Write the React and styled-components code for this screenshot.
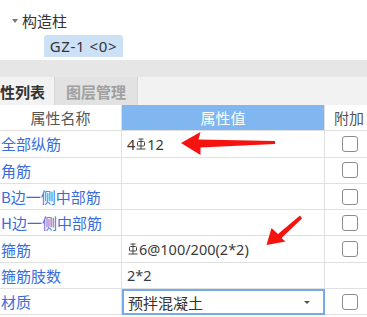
import styled, { createGlobalStyle } from 'styled-components';

const Global = createGlobalStyle`
	html, body {
		margin: 0;
		padding: 0;
		background: #fff;
		overflow: hidden;
	}
	body {
		font-family: "Noto Sans", "Noto Sans CJK SC", sans-serif;
		color: #333;
	}
`;

const Page = styled.div`
	position: relative;
	width: 367px;
	height: 317px;
	overflow: hidden;
`;

const Tree = styled.div`
	height: 57px;
	display: flex;
	flex-direction: column;
	padding-top: 9px;
	box-sizing: border-box;
`;

const TreeRow = styled.div`
	display: flex;
	align-items: center;
	height: 22px;
	padding-left: ${(p) => p.indent}px;
	font-size: 15px;
	color: #333;
	font-family: "Noto Sans CJK SC", sans-serif;
`;

const Caret = styled.span`
	width: 0;
	height: 0;
	border-left: 3.5px solid transparent;
	border-right: 3.5px solid transparent;
	border-top: 4px solid #777;
	margin-right: 4px;
	margin-top: 2px;
`;

const Chip = styled.div`
	margin-top: 4px;
	margin-left: 44px;
	width: 79px;
	height: 22px;
	display: flex;
	align-items: center;
	justify-content: center;
	background: #cde1f6;
	border-radius: 3px 3px 0 0;
	font-size: 15px;
	color: #333;
	letter-spacing: 0.6px;
`;

const Band = styled.div`
	margin-top: 3px;
	height: 17px;
	background: #e6e6e6;
`;

const TabBar = styled.div`
	height: 28px;
	display: flex;
	background: #f2f2f2;
	margin-left: -15px;
`;

const Tab = styled.div`
	display: flex;
	align-items: center;
	padding: 0 ${(p) => (p.active ? 9 : 11)}px 0 ${(p) => (p.active ? 0 : 11)}px;
	font-size: 15px;
	font-weight: bold;
	font-family: "Noto Sans CJK SC", sans-serif;
	color: ${(p) => (p.active ? '#333' : '#a0a0a0')};
	background: ${(p) => (p.active ? '#f2f2f2' : '#e2e2e2')};
	border-left: ${(p) => (p.active ? 'none' : '1px solid #d6d6d6')};
	border-right: ${(p) => (p.active ? 'none' : '1px solid #d6d6d6')};
`;

const Grid = styled.div`
	display: grid;
	grid-template-columns: 122px 203px 49px;
	grid-auto-rows: 26.3px;
	font-family: "Noto Sans CJK SC", sans-serif;
	font-size: 15px;
`;

const Head = styled.div`
	display: flex;
	align-items: center;
	justify-content: center;
	background: ${(p) => (p.blue ? '#80b7f0' : '#fff')};
	color: ${(p) => (p.blue ? '#fff' : '#555')};
	border-bottom: 1px solid #dedede;
	border-right: 1px solid #dedede;
	box-sizing: border-box;
`;

const Cell = styled.div`
	display: flex;
	align-items: center;
	box-sizing: border-box;
	border-bottom: 1px solid #e0e0e0;
	border-right: 1px solid #e0e0e0;
	padding-left: ${(p) => p.pad ?? 0}px;
	justify-content: ${(p) => (p.center ? 'center' : 'flex-start')};
	color: ${(p) => (p.label ? '#3a6ddb' : '#333')};
	white-space: nowrap;
	overflow: hidden;
`;

const Value = styled.span`
	font-family: "Noto Sans", "Noto Sans CJK SC", sans-serif;
	font-size: 14.5px;
	color: #3a3a3a;
	display: inline-flex;
	align-items: center;
`;

const Select = styled.div`
	display: flex;
	align-items: center;
	justify-content: space-between;
	box-sizing: border-box;
	border: 2px solid #74aae8;
	padding: 0 13px 0 4px;
	color: #333;
	font-size: 15px;
`;

const SelectCaret = styled.span`
	width: 0;
	height: 0;
	border-left: 3px solid transparent;
	border-right: 3px solid transparent;
	border-top: 3px solid #555;
`;

const Check = styled.span`
	width: 16px;
	height: 16px;
	box-sizing: border-box;
	border: 1.5px solid #8c8c8c;
	border-radius: 3px;
	background: #fff;
	margin-left: 1px;
`;

const Overlay = styled.svg`
	position: absolute;
	left: 0;
	top: 0;
	pointer-events: none;
`;

function Rebar() {
	return (
		<svg width="10" height="12" viewBox="0 0 10 12" style={{ margin: '0 1px' }}>
			<g stroke="#444" strokeWidth="1" fill="none">
				<line x1="2.5" y1="1" x2="7.5" y2="1" />
				<line x1="5" y1="1" x2="5" y2="11" />
				<rect x="1.5" y="3.5" width="7" height="4.5" rx="1" />
				<line x1="0.5" y1="11" x2="9.5" y2="11" />
			</g>
		</svg>
	);
}

const rows = [
	{ name: '全部纵筋', value: <>4<Rebar />12</>, check: true },
	{ name: '角筋', value: null, check: true },
	{ name: 'B边一侧中部筋', value: null, check: true },
	{ name: 'H边一侧中部筋', value: null, check: true },
	{ name: '箍筋', value: <><Rebar />6@100/200(2*2)</>, check: true },
	{ name: '箍筋肢数', value: '2*2', check: false },
];

export default function App() {
	return (
		<Page>
			<Global />
			<Tree>
				<TreeRow indent={12}>
					<Caret />
					构造柱
				</TreeRow>
				<Chip>GZ-1 &lt;0&gt;</Chip>
			</Tree>
			<Band />
			<TabBar>
				<Tab active>属性列表</Tab>
				<Tab>图层管理</Tab>
			</TabBar>
			<Grid>
				<Head>属性名称</Head>
				<Head blue>属性值</Head>
				<Head>附加</Head>
				{rows.map((r) => (
					<>
						<Cell key={r.name + 'n'} label pad={1}>{r.name}</Cell>
						<Cell key={r.name + 'v'} pad={5}>
							<Value>{r.value}</Value>
						</Cell>
						<Cell key={r.name + 'c'} center>{r.check && <Check />}</Cell>
					</>
				))}
				<Cell label pad={1}>材质</Cell>
				<Select>
					预拌混凝土
					<SelectCaret />
				</Select>
				<Cell center>
					<Check />
				</Cell>
			</Grid>
			<Overlay width="367" height="317">
				<polygon
					fill="#f5130f"
					points="181,143 200.5,132 198.5,139.5 275,141 275,144 200.5,147.5 200.5,155"
				/>
				<polygon
					fill="#f5130f"
					points="266.5,245 271.5,228 278,234 300,215.5 302,218.5 281.5,238 285.5,241.5"
				/>
			</Overlay>
		</Page>
	);
}
